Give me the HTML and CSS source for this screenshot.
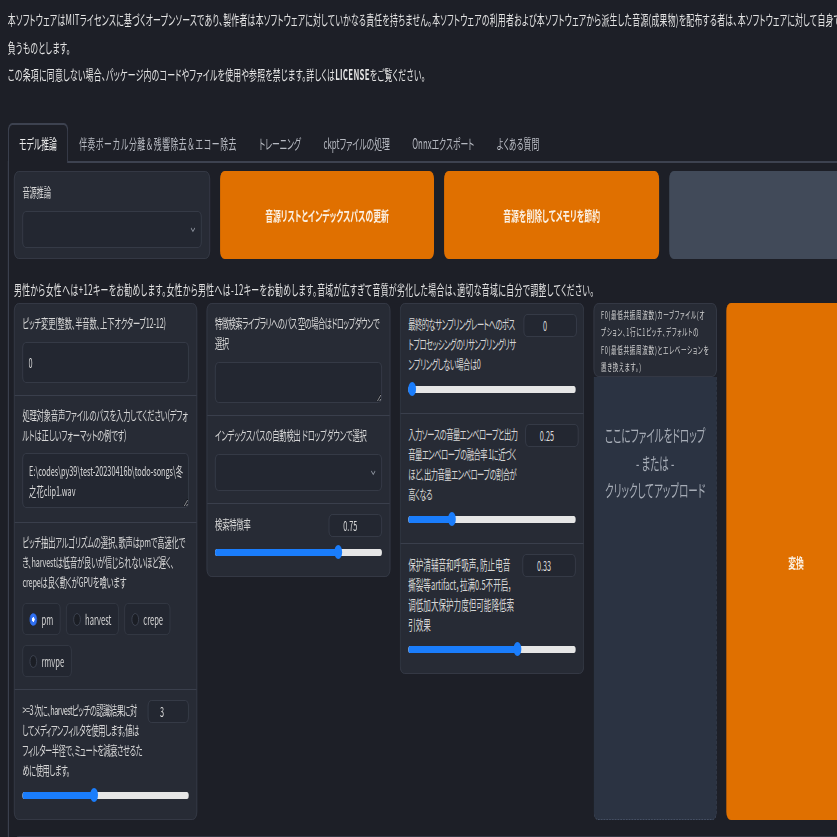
FILE: index.html
```html
<!DOCTYPE html>
<html lang="ja">
<head>
  <meta charset="UTF-8" />
  <meta name="viewport" content="width=device-width, initial-scale=1.0"/>
  <title>RVC WebUI</title>
  <link rel="stylesheet" href="styles.css">
</head>
<body>
<div class="app">

  <div class="notice">
    本ソフトウェアはMITライセンスに基づくオープンソースであり、製作者は本ソフトウェアに対していかなる責任を持ちません。本ソフトウェアの利用者および本ソフトウェアから派生した音源(成果物)を配布する者は、本ソフトウェアに対して自身で責任を<br>
    負うものとします。<br>
    この条項に同意しない場合、パッケージ内のコードやファイルを使用や参照を禁じます。詳しくは<b>LICENSE</b>をご覧ください。
  </div>

  <div class="tabs">
    <div class="tab-nav">
      <button class="tab selected">モデル推論</button>
      <button class="tab wide">伴奏ボーカル分離＆残響除去＆エコー除去</button>
      <button class="tab">トレーニング</button>
      <button class="tab">ckptファイルの処理</button>
      <button class="tab">Onnxエクスポート</button>
      <button class="tab">よくある質問</button>
    </div>

    <div class="tab-panel">

      <!-- model picker + actions -->
      <div class="top-row">
        <div class="block">
          <div class="label">音源推論</div>
          <div class="dropdown">
            <svg width="9" height="6" viewBox="0 0 9 6"><polyline points="1,1 4.5,4.5 8,1" fill="none" stroke="#8d939e" stroke-width="1.2"/></svg>
          </div>
        </div>
        <button class="btn primary">音源リストとインデックスパスの更新</button>
        <button class="btn primary">音源を削除してメモリを節約</button>
        <div class="btn secondary"></div>
      </div>

      <p class="hint">男性から女性へは+12キーをお勧めします。女性から男性へは-12キーをお勧めします。音域が広すぎて音質が劣化した場合は、適切な音域に自分で調整してください。</p>

      <div class="main-row">

        <div class="group">
          <div class="field">
            <div class="label">ピッチ変更(整数、半音数、上下オクターブ12-12)</div>
            <input class="text-input" type="number" value="0">
          </div>
          <div class="field pad-more">
            <div class="label lines tight">処理対象音声ファイルのパスを入力してください(デフォ<br>ルトは正しいフォーマットの例です)</div>
            <textarea class="textarea" rows="2">E:\codes\py39\test-20230416b\todo-songs\冬之花clip1.wav</textarea>
          </div>
          <div class="field">
            <div class="label lines">ピッチ抽出アルゴリズムの選択、歌声はpmで高速化で<br>き、harvestは低音が良いが信じられないほど遅く、<br>crepeは良く動くがGPUを喰います</div>
            <div class="radios">
              <label class="radio"><span class="dot on"></span>pm</label>
              <label class="radio"><span class="dot"></span>harvest</label>
              <label class="radio"><span class="dot"></span>crepe</label>
              <label class="radio"><span class="dot"></span>rmvpe</label>
            </div>
          </div>
          <div class="field slider-field">
            <div class="slider-head snug">
              <div class="label lines kana">&gt;=3 次に、harvestピッチの認識結果に対<br>してメディアンフィルタを使用します。値は<br>フィルター半径で、ミュートを減衰させるた<br>めに使用します。</div>
              <input class="num small" type="number" value="3">
            </div>
            <div class="slider" style="--p: 0.4286"><div class="track"><div class="fill"></div></div><div class="thumb"></div></div>
          </div>
        </div>

        <div class="group">
          <div class="field">
            <div class="label lines kana">特徴検索ライブラリへのパス 空の場合はドロップダウンで<br>選択</div>
            <textarea class="textarea" rows="1"></textarea>
          </div>
          <div class="field">
            <div class="label">インデックスパスの自動検出 ドロップダウンで選択</div>
            <div class="dropdown">
              <svg width="9" height="6" viewBox="0 0 9 6"><polyline points="1,1 4.5,4.5 8,1" fill="none" stroke="#8d939e" stroke-width="1.2"/></svg>
            </div>
          </div>
          <div class="field slider-field">
            <div class="slider-head">
              <div class="label">検索特徴率</div>
              <input class="num" type="number" value="0.75">
            </div>
            <div class="slider" style="--p: 0.75"><div class="track"><div class="fill"></div></div><div class="thumb"></div></div>
          </div>
        </div>

        <div class="group">
          <div class="field slider-field">
            <div class="slider-head">
              <div class="label lines kana">最終的なサンプリングレートへのポス<br>トプロセッシングのリサンプリングリサ<br>ンプリングしない場合は0</div>
              <input class="num" type="number" value="0">
            </div>
            <div class="slider" style="--p: 0"><div class="track"><div class="fill"></div></div><div class="thumb"></div></div>
          </div>
          <div class="field slider-field">
            <div class="slider-head">
              <div class="label lines kana">入力ソースの音量エンベロープと出力<br>音量エンベロープの融合率 1に近づく<br>ほど、出力音量エンベロープの割合が<br>高くなる</div>
              <input class="num" type="number" value="0.25">
            </div>
            <div class="slider" style="--p: 0.25"><div class="track"><div class="fill"></div></div><div class="thumb"></div></div>
          </div>
          <div class="field slider-field">
            <div class="slider-head">
              <div class="label hanzi">保护清辅音和呼吸声，防止电音撕裂等artifact，拉满0.5不开启，调低加大保护力度但可能降低索引效果</div>
              <input class="num" type="number" value="0.33">
            </div>
            <div class="slider" style="--p: 0.66"><div class="track"><div class="fill"></div></div><div class="thumb"></div></div>
          </div>
        </div>

        <div class="file-col">
          <div class="file-info">F0(最低共振周波数)カーブファイル(オプション、1行に1ピッチ、デフォルトのF0(最低共振周波数)とエレベーションを置き換えます。)</div>
          <div class="dropzone">
            ここにファイルをドロップ<br>
            - または -<br>
            クリックしてアップロード
          </div>
        </div>

        <button class="btn primary convert">変換</button>
      </div>

      <div class="output-row">
        <div class="block output"></div>
      </div>

    </div>
  </div>

</div>
</body>
</html>
```

FILE: styles.css
```css
html, body { margin: 0; height: 100%; overflow: hidden; background: #1d1f27; }
body {
  font-family: "Noto Sans CJK JP", "Noto Sans", sans-serif;
  color: #d9d9d9; font-feature-settings: "palt";
}
.app { width: 1571px; transform: scaleX(0.56); transform-origin: 0 0; }

.notice {
  padding: 6px 14px 0; font-size: 14px; line-height: 27.5px; letter-spacing: 0.5px;
  white-space: nowrap; color: #e4e4e4;
}
.notice b { font-weight: 700; }

.tabs { margin: 34.5px 14px 0; }
.tab-nav { display: flex; border-bottom: 2px solid #3d4250; }
.tab {
  font: inherit; font-size: 14px; line-height: 20px; color: #b7bac2;
  background: none; border: 2px solid transparent; border-bottom: 0;
  margin-bottom: -2px; padding: 8px 18px 10px; border-radius: 8px 8px 0 0;
}
.tab.wide { font-feature-settings: normal; letter-spacing: 0.8px; }
.tab.selected { color: #ececec; border-color: #3d4250; background: #1d1f27; }

.tab-panel {
  border-left: 2px solid #3d4250; border-right: 2px solid #3d4250;
  padding: 8px 9px 0;
}

.top-row {
  display: grid; grid-template-columns: 350px 382px 384px 1fr;
  gap: 18px; height: 87px;
}
.block {
  background: #272b35; border: 1px solid #3a3f4c; border-radius: 8px;
  padding: 10px 14px;
}
.label {
  font-size: 13px; line-height: 20px; letter-spacing: -0.3px;
  margin-bottom: 9px; color: #d6d6d6;
}
.label.lines { white-space: nowrap; }
.label.kana { letter-spacing: -0.9px; }
.label.tight { margin-bottom: 8px; }
.label.hanzi { font-size: 13.5px; letter-spacing: 0; }

.dropdown {
  height: 37px; box-sizing: border-box; background: #232731;
  border: 1px solid #3a3f4c; border-radius: 6px;
  display: flex; align-items: center; justify-content: flex-end; padding-right: 10px;
}

.btn {
  font: inherit; border: 0; border-radius: 8px; cursor: pointer;
}
.btn.primary {
  background: #e07000; color: #fbf0e2; font-size: 14px; font-weight: 700;
}
.btn.secondary { background: #414a59; }

.hint {
  margin: 21px 0 4px; font-size: 14px; line-height: 20px; letter-spacing: 0.7px;
  color: #e2e2e2;
}

.main-row {
  display: grid; grid-template-columns: 327px 328px 329px 220px 1fr;
  gap: 17px; align-items: start;
}
.group { background: #272b35; border: 1px solid #3a3f4c; border-radius: 8px; }
.field { padding: 9px 14px 12px; }
.field + .field { border-top: 1px solid #3a3f4c; }
.field.pad-more { padding-bottom: 14px; }

.text-input, .textarea, .num {
  display: block; width: 100%; box-sizing: border-box; font: inherit;
  font-size: 13px; color: #d9d9d9; background: #232731;
  border: 1px solid #3a3f4c; border-radius: 6px; outline: none;
}
.text-input { height: 41px; padding: 0 10px; }
.textarea { padding: 7px 4px 6px 11px; line-height: 20px; resize: vertical; }
.textarea[rows="2"] { height: 55px; }
.textarea[rows="1"] { height: 41px; }
.num { width: 95px; height: 23px; flex: none; text-align: center; padding: 0 18px 0 0; }
.num.small { width: 73px; padding-right: 22px; }
input[type=number]::-webkit-inner-spin-button { display: none; }

.radios { display: flex; flex-wrap: wrap; gap: 10px; margin-top: 11px; }
.radio {
  display: flex; align-items: center; gap: 8px; height: 32px; box-sizing: border-box;
  padding: 0 12px; background: #232731; border: 1px solid #363b47; border-radius: 6px;
  font-size: 13.5px; color: #d4d4d4;
}
.dot {
  width: 13px; height: 13px; border-radius: 50%; box-sizing: border-box;
  background: #1b1e25; border: 1px solid #434957;
}
.dot.on { border-color: #2f6ff2; background: radial-gradient(circle, #fff 0 2px, #2f6ff2 2.6px); }

.slider-field { padding-top: 10px; padding-bottom: 17px; }
.slider-head { display: flex; align-items: flex-start; gap: 14px; }
.slider-head.snug { gap: 6px; }
.slider-head .label { flex: 1; margin: 0; }
.slider { position: relative; height: 14px; margin-top: 8px; }
.track {
  position: absolute; left: 0; right: 0; top: 3.5px; height: 7px;
  background: #e6e6e6; border-radius: 4px; overflow: hidden;
}
.fill { height: 100%; width: calc(7px + (100% - 14px) * var(--p)); background: #1a7dfc; }
.thumb {
  position: absolute; top: 0; width: 14px; height: 14px; border-radius: 50%;
  background: #1a7dfc; left: calc((100% - 14px) * var(--p));
}

.file-col { align-self: stretch; display: flex; flex-direction: column; }
.file-info {
  background: #272b35; border: 1px solid #3a3f4c; border-radius: 8px;
  padding: 2px 12px 1px; font-size: 10px; letter-spacing: 1.2px; line-height: 17.3px;
  color: #d0d0d0;
}
.dropzone {
  flex: 1; background: #2b3342; border: 1px dashed #465064; border-top: 0;
  border-radius: 0 0 8px 8px; padding-top: 44px; text-align: center;
  font-size: 17px; line-height: 27.5px; color: #a7adb7;
}

.convert { align-self: stretch; font-size: 14.5px; }

.output-row { margin-top: 16px; }
.output { height: 120px; }
```
